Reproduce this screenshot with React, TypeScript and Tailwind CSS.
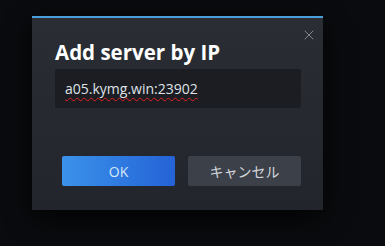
import { X } from "lucide-react";

export default function App() {
	return (
		<div className="h-[246px] w-[385px] bg-[#0a0b0e] pl-[32px] pt-[16px] font-['Open_Sans','Noto_Sans_CJK_JP',sans-serif]">
			<div className="relative w-[291px] h-[194px] border-t-2 border-[#4a9fd8] bg-gradient-to-b from-[#2a2d34] to-[#22252b] shadow-[0_8px_24px_rgba(0,0,0,0.8)]">
				<button className="absolute right-[6px] top-[9px] text-[#8b8f96]">
					<X size={16} strokeWidth={1.4} />
				</button>
				<div className="pl-[23px] pr-[22px] pt-[20px]">
					<h1 className="text-[20.5px] leading-[28px] font-bold text-white">
						Add server by IP
					</h1>
					<div className="mt-[3px] h-[39px] bg-[#1b1d22] flex items-center pl-[10px] text-[14px] text-[#dfe2e6] rounded-[2px]">
						<span className="underline decoration-wavy decoration-[#d22] decoration-1 underline-offset-[3px]">
							a05.kymg.win:23902
						</span>
					</div>
				</div>
				<div className="flex gap-[13px] pl-[30px] pr-[22px] mt-[48px]">
					<button className="w-[113px] h-[30px] rounded-[2px] bg-gradient-to-r from-[#3b92ea] to-[#2562d6] text-[14px] text-[#d8e8fb]">
						OK
					</button>
					<button className="w-[113px] h-[30px] rounded-[2px] bg-[#3c4049] text-[14px] text-[#d3d6db]">
						キャンセル
					</button>
				</div>
			</div>
		</div>
	);
}
